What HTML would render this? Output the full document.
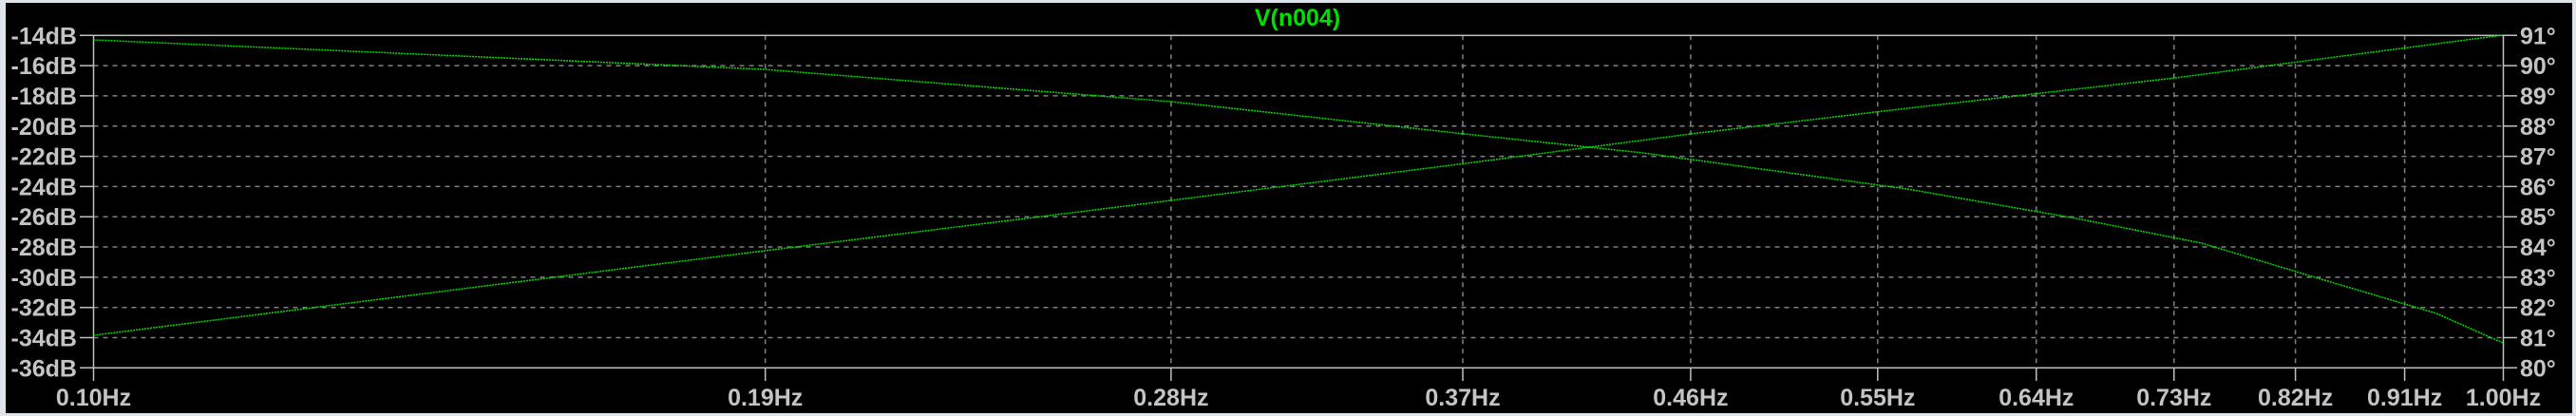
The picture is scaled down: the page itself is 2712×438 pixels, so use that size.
<!DOCTYPE html>
<html><head><meta charset="utf-8"><style>
html,body{margin:0;padding:0;background:#e8ecf0;}
svg{display:block;}
text{font-family:"Liberation Sans",Arial,sans-serif;font-weight:bold;font-size:25px;fill:#c4c4c4;}
</style></head><body>
<svg width="2712" height="438" xmlns="http://www.w3.org/2000/svg">
<rect x="0" y="0" width="2712" height="438" fill="#dfe4ea"/>
<rect x="6" y="3" width="2702" height="432" fill="#000"/>
<g stroke="#808080" stroke-width="1.5" stroke-dasharray="5,5" fill="none">
<line x1="98.5" y1="69.1" x2="2635.5" y2="69.1"/>
<line x1="98.5" y1="100.9" x2="2635.5" y2="100.9"/>
<line x1="98.5" y1="132.8" x2="2635.5" y2="132.8"/>
<line x1="98.5" y1="164.6" x2="2635.5" y2="164.6"/>
<line x1="98.5" y1="196.4" x2="2635.5" y2="196.4"/>
<line x1="98.5" y1="228.2" x2="2635.5" y2="228.2"/>
<line x1="98.5" y1="260" x2="2635.5" y2="260"/>
<line x1="98.5" y1="291.9" x2="2635.5" y2="291.9"/>
<line x1="98.5" y1="323.7" x2="2635.5" y2="323.7"/>
<line x1="98.5" y1="355.5" x2="2635.5" y2="355.5"/>
<line x1="805.7" y1="37.3" x2="805.7" y2="387.3"/>
<line x1="1232.9" y1="37.3" x2="1232.9" y2="387.3"/>
<line x1="1540" y1="37.3" x2="1540" y2="387.3"/>
<line x1="1779.9" y1="37.3" x2="1779.9" y2="387.3"/>
<line x1="1976.8" y1="37.3" x2="1976.8" y2="387.3"/>
<line x1="2143.8" y1="37.3" x2="2143.8" y2="387.3"/>
<line x1="2288.8" y1="37.3" x2="2288.8" y2="387.3"/>
<line x1="2416.6" y1="37.3" x2="2416.6" y2="387.3"/>
<line x1="2531.6" y1="37.3" x2="2531.6" y2="387.3"/>
</g>
<g stroke="#c0c0c0" stroke-width="1.5" fill="none">
<rect x="98.5" y="37.3" width="2537" height="350"/>
<path d="M84 37.3H98.5M84 69.1H98.5M84 100.9H98.5M84 132.8H98.5M84 164.6H98.5M84 196.4H98.5M84 228.2H98.5M84 260H98.5M84 291.9H98.5M84 323.7H98.5M84 355.5H98.5M84 387.3H98.5"/>
<path d="M2635.5 37.3H2650M2635.5 69.1H2650M2635.5 100.9H2650M2635.5 132.8H2650M2635.5 164.6H2650M2635.5 196.4H2650M2635.5 228.2H2650M2635.5 260H2650M2635.5 291.9H2650M2635.5 323.7H2650M2635.5 355.5H2650M2635.5 387.3H2650"/>
<path d="M98.5 387V401M805.7 387V401M1232.9 387V401M1540 387V401M1779.9 387V401M1976.8 387V401M2143.8 387V401M2288.8 387V401M2416.6 387V401M2531.6 387V401M2635.5 387V401"/>
</g>
<g stroke="#00e000" stroke-width="1.5" fill="none" stroke-dasharray="2,1">
<polyline points="98.5,42 804,73 1233,107 1551,142 1730,161 2008,199 2186,230 2318,256 2444,294 2565,330 2635,361"/>
<polyline points="98.5,353 805,264 1233,211 1551,171 1780,141 2008,114 2290,82 2635,37"/>
</g>
<text x="1366" y="27" text-anchor="middle" style="fill:#00e000">V(n004)</text>
<g text-anchor="end">
<text x="81" y="46.3">-14dB</text>
<text x="81" y="78.1">-16dB</text>
<text x="81" y="109.9">-18dB</text>
<text x="81" y="141.8">-20dB</text>
<text x="81" y="173.6">-22dB</text>
<text x="81" y="205.4">-24dB</text>
<text x="81" y="237.2">-26dB</text>
<text x="81" y="269">-28dB</text>
<text x="81" y="300.9">-30dB</text>
<text x="81" y="332.7">-32dB</text>
<text x="81" y="364.5">-34dB</text>
<text x="81" y="396.3">-36dB</text>
</g>
<g>
<text x="2653" y="46.3">91°</text>
<text x="2653" y="78.1">90°</text>
<text x="2653" y="109.9">89°</text>
<text x="2653" y="141.8">88°</text>
<text x="2653" y="173.6">87°</text>
<text x="2653" y="205.4">86°</text>
<text x="2653" y="237.2">85°</text>
<text x="2653" y="269">84°</text>
<text x="2653" y="300.9">83°</text>
<text x="2653" y="332.7">82°</text>
<text x="2653" y="364.5">81°</text>
<text x="2653" y="396.3">80°</text>
</g>
<g text-anchor="middle">
<text x="98.5" y="427">0.10Hz</text>
<text x="805.7" y="427">0.19Hz</text>
<text x="1232.9" y="427">0.28Hz</text>
<text x="1540" y="427">0.37Hz</text>
<text x="1779.9" y="427">0.46Hz</text>
<text x="1976.8" y="427">0.55Hz</text>
<text x="2143.8" y="427">0.64Hz</text>
<text x="2288.8" y="427">0.73Hz</text>
<text x="2416.6" y="427">0.82Hz</text>
<text x="2531.6" y="427">0.91Hz</text>
<text x="2635.5" y="427">1.00Hz</text>
</g>
</svg>
</body></html>
